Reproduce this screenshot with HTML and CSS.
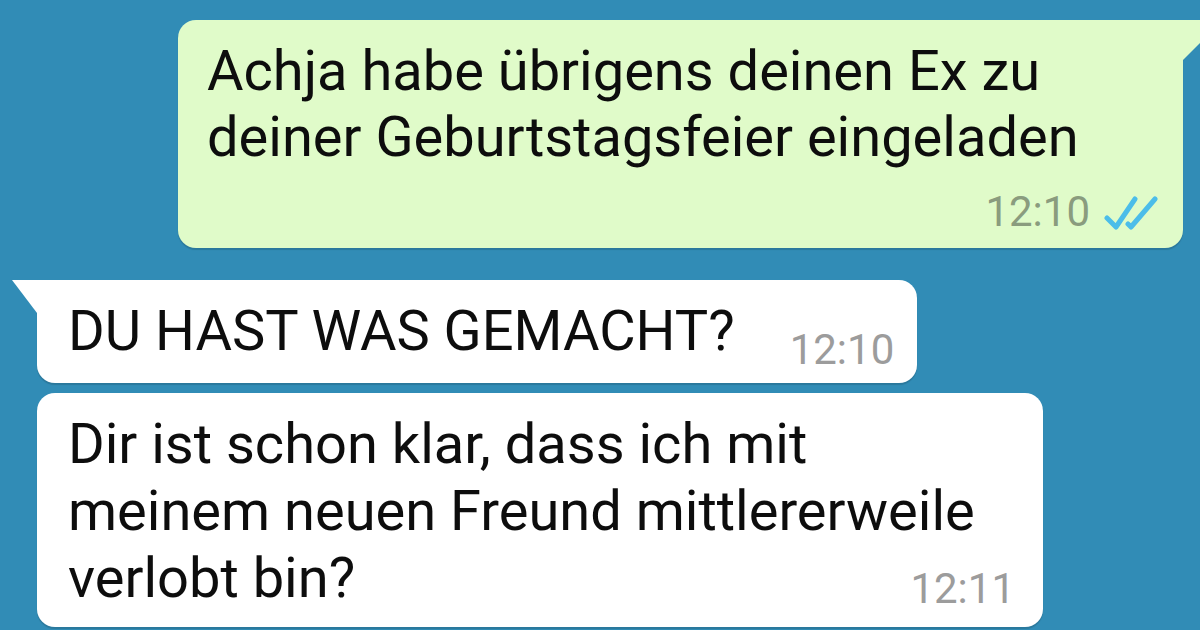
FILE: index.html
```html
<!DOCTYPE html>
<html lang="de">

<head>
    <meta charset="UTF-8">
    <meta name="viewport" content="width=device-width, initial-scale=1.0">
    <title>Chat</title>
    <link rel="stylesheet" href="styles.css">
</head>

<body>
    <div class="chat">

        <div class="msg out">
            <div class="msg-text">Achja habe übrigens deinen Ex zu<br>deiner Geburtstagsfeier eingeladen</div>
            <div class="msg-meta">
                <span class="msg-time">12:10</span>
                <svg class="ticks" width="54" height="36" viewBox="0 0 54 36">
                    <path d="M3 24 L12 33 L31 5" />
                    <path d="M24 30 L27 33 L51 5" />
                </svg>
            </div>
        </div>

        <div class="msg in first short">
            <div class="msg-text">DU HAST WAS GEMACHT?</div>
            <span class="msg-time">12:10</span>
        </div>

        <div class="msg in long">
            <div class="msg-text">Dir ist schon klar, dass ich mit<br>meinem neuen Freund mittlererweile<br>verlobt bin?</div>
            <span class="msg-time">12:11</span>
        </div>

    </div>
</body>

</html>
```

FILE: styles.css
```css
:root {
    --chat-bg: #318cb6;
    --out-bg: #e0fbc9;
    --in-bg: #ffffff;
    --text-color: #0d0d0d;
    --out-time: #8a9c7e;
    --in-time: #9c9c9c;
    --tick-color: #4cbde9;
}

body {
    font-family: Roboto, "Noto Sans", Arial, sans-serif;
    margin: 0;
    padding: 0;
    height: 100vh;
    width: 100vw;
    overflow: hidden;
    background-color: var(--chat-bg);
    color: var(--text-color);
}

.chat {
    display: flex;
    flex-direction: column;
    align-items: flex-start;
    padding-top: 20px;
}

.msg {
    position: relative;
    box-sizing: border-box;
    border-radius: 18px;
    box-shadow: 0 2px 1px rgba(0, 0, 0, 0.14);
}

.msg-text {
    font-size: 56px;
    line-height: 66px;
}

.msg-time {
    font-size: 42px;
    line-height: 28px;
    white-space: nowrap;
}

/* outgoing (green) */
.out {
    background-color: var(--out-bg);
    margin-left: 178px;
    width: 1005px;
    padding: 18px 25px 18px 29px;
    border-top-right-radius: 0;
}

.out::after {
    content: "";
    position: absolute;
    left: 100%;
    top: 0;
    width: 40px;
    height: 40px;
    background-color: var(--out-bg);
    clip-path: polygon(0 0, 100% 0, 0 100%);
}

.out .msg-time {
    color: var(--out-time);
}

.msg-meta {
    display: flex;
    justify-content: flex-end;
    align-items: center;
    gap: 14px;
    margin-top: 24px;
}

.ticks {
    display: block;
}

.ticks path {
    fill: none;
    stroke: var(--tick-color);
    stroke-width: 5;
    stroke-linecap: round;
    stroke-linejoin: round;
}

/* incoming (white) */
.in {
    background-color: var(--in-bg);
    margin-left: 37px;
}

.in .msg-time {
    color: var(--in-time);
}

.in.first {
    border-top-left-radius: 0;
}

.in.first::before {
    content: "";
    position: absolute;
    right: 100%;
    top: 0;
    width: 25px;
    height: 33px;
    background-color: var(--in-bg);
    clip-path: polygon(0 0, 100% 0, 100% 100%);
}

.short {
    margin-top: 32px;
    display: flex;
    align-items: flex-end;
    gap: 55px;
    padding: 18px 23px 19px 31px;
}

.long {
    margin-top: 10px;
    width: 1006px;
    display: grid;
    padding: 18px 28px 15px 31px;
}

.long .msg-text {
    line-height: 67px;
}

.long .msg-text,
.long .msg-time {
    grid-area: 1 / 1;
}

.long .msg-time {
    justify-self: end;
    align-self: end;
    margin-bottom: 9px;
}
```
